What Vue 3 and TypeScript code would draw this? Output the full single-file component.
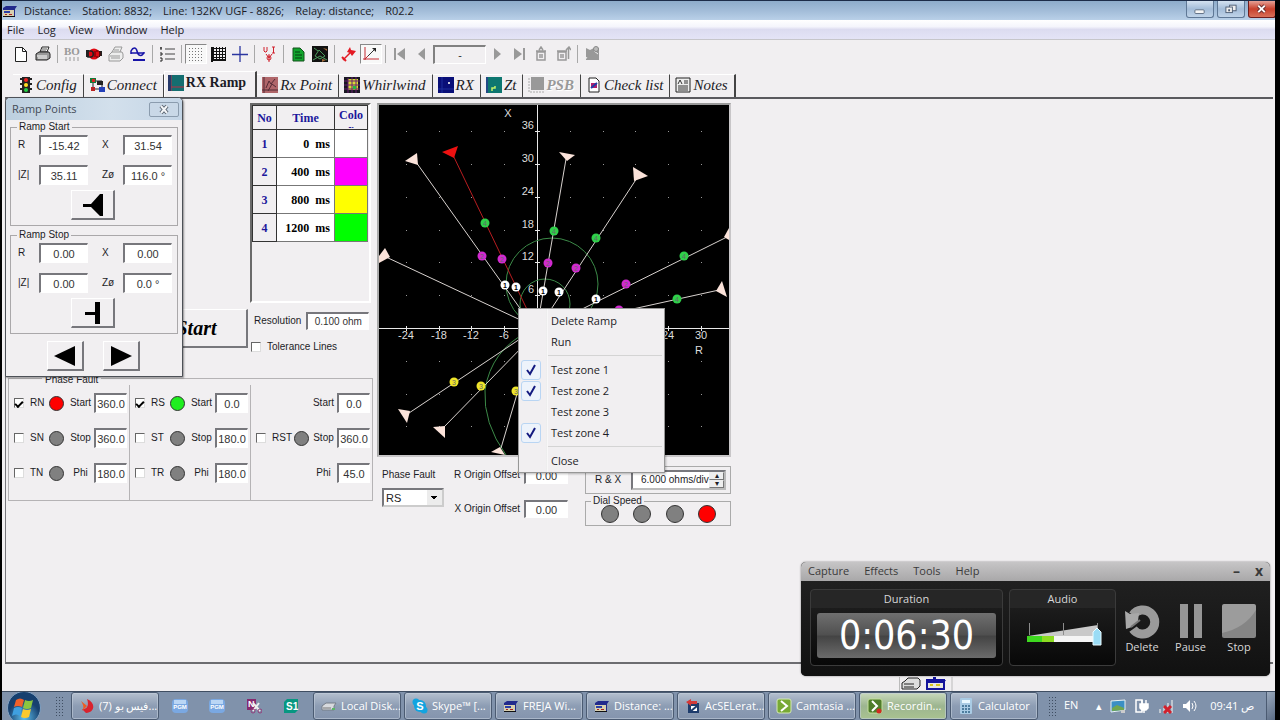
<script setup lang="ts">
type Tool = { icon?: string; label?: string; sep?: boolean; pressed?: boolean; field?: boolean }
type MenuItem = { text?: string; on?: boolean; rule?: boolean }

const art: Record<string, string> = {
  device: '<path d="M1 5l3-2h11l-2 3v8H1z" fill="#222a8c"/><path d="M1 7h11v6H1z" fill="#d8cfae"/><path d="M2 8h6v2H2z" fill="#2b3fa8"/><path d="M3 11h2v1H3zM7 11h3v1H7z" fill="#a22"/><path d="M1 13h12v1H1z" fill="#111"/>',
  page: '<path d="M2.5 1.5h7l4 4v10h-11z" fill="#fff" stroke="#222"/><path d="M9.500 1.500v4h4" fill="none" stroke="#222"/>',
  print: '<path d="M5 6l2-5h7l-2 5z" fill="#fff" stroke="#222"/><path d="M7 3h5M6 5h5" stroke="#555"/><path d="M1 8l3-2h10l1 2v4l-3 2H1z" fill="#999" stroke="#222"/><path d="M2 10h10M3 12h9" stroke="#fff"/>',
  bo: '<text x="0" y="9" font-family="Liberation Serif,serif" font-size="11" font-weight="bold" fill="#999">BO</text><path d="M1 12h14M1 14h14" stroke="#999" stroke-dasharray="2 2"/>',
  stop: '<path d="M0 4h3v7H0zM13 5h3v5h-3z" fill="#222"/><circle cx="8" cy="8" r="5.500" fill="#e00912"/><path d="M2 5h3c3 0 3 6 0 6H2z" fill="none" stroke="#222" stroke-width="1.500"/><path d="M9 5v6M10 5h3l1 1v4l-1 1h-3" fill="none" stroke="#500"/>',
  printOff: '<path d="M4 6l3-5h7l-2 5M1 9l3-3h10l1 2v4l-3 3H1z" fill="#eee" stroke="#999"/><path d="M2 10h10M3 12h9M6 4h5" stroke="#999"/>',
  wave: '<path d="M1 8V5c2-4 5-4 6 0 1 5 4 6 7 2V6M1 7h13" fill="none" stroke="#1714a8" stroke-width="1.500"/><path d="M3 14h12" stroke="#1714a8" stroke-width="2"/>',
  list: '<path d="M6 3h10M6 8h10M6 13h10" stroke="#444"/><path d="M2 1v3M1 2h2M1 7h2v2H1M1 12h2v3H1" fill="none" stroke="#222"/>',
  dots: '<path d="M1 2.500h15M1 5.500h15M1 8.500h15M1 11.500h15M1 14.500h15" stroke="#777" stroke-dasharray="1 2"/>',
  grid: '<path d="M3.500 1v13M6.500 1v13M9.500 1v13M12.500 1v13M15.500 1v13M1 2.500h15M1 5.500h15M1 8.500h15M1 11.500h15M1 14.500h15" stroke="#111"/><path d="M2 1v15M1 14h15" stroke="#111" stroke-width="2"/>',
  cross: '<path d="M8 0v16M0 8.500h16" stroke="#2b35a0" stroke-width="1.300"/>',
  ui: '<path d="M3 1v4l1 1h1l1-1V1M11 1h3M12.500 1v6M11 7h3M5 8l3 4 3-4" fill="none" stroke="#d0202c"/><circle cx="8" cy="12" r="2" fill="none" stroke="#d0202c"/><path d="M8 8v8" stroke="#d0202c"/>',
  report: '<path d="M3 2h7l4 4v9H3z" fill="#11a52d" stroke="#14521c"/><path d="M5 6h5M5 9h7M5 12h7" stroke="#073c10"/>',
  chart: '<path d="M0 0h16v16H0z" fill="#111"/><path d="M3 10L7 4l6 6-5 3zM1 14l7-4 7 4M2 2l4 3" fill="none" stroke="#4a9a5c"/><path d="M11 2l4 1v2zM10 13l4 1-4 2z" fill="#a06838"/>',
  arrow: '<path d="M2 14l8-8" stroke="#e31923" stroke-width="1.500"/><path d="M9 1l1 3 5 1-4 5-2-3-3-1z" fill="#e31923"/><path d="M1 11l4 4" stroke="#e31923" stroke-width="2"/>',
  axes: '<path d="M2 1v13M0 13h16M2 13l4-4" stroke="#c62a32" fill="none"/><path d="M5 10l6-6" stroke="#333"/><path d="M9 2h4v4z" fill="#222"/>',
  first: '<path d="M2 2h2v12H2zM13 2v12L5 8z" fill="#999"/>',
  prev: '<path d="M11 2v12L4 8z" fill="#999"/>',
  next: '<path d="M5 2v12l7-6z" fill="#999"/>',
  last: '<path d="M12 2h2v12h-2zM3 2v12l8-6z" fill="#999"/>',
  trash: '<path d="M4 6h8v8H4zM3 5h10M6 4l2-3 2 3M7 8v4M9 8v4" fill="none" stroke="#999" stroke-width="1.500"/>',
  trashAll: '<path d="M3 6h8v8H3zM2 5h10M6 8v4M8 8v4M13.500 13V2M11 4l3-3 2 3" fill="none" stroke="#999" stroke-width="1.500"/>',
  photo: '<path d="M2 2l4 2 4-2h5v12H2z" fill="#999"/><path d="M10 5l4 3M3 11l-2 3" stroke="#eee"/><circle cx="12" cy="3" r="2.500" fill="#bbb" stroke="#888"/>',
  light: '<path d="M4 0h8v16H4z" fill="#222"/><path d="M2 2h12M2 7h12M2 12h12" stroke="#222" stroke-width="2"/><circle cx="8" cy="3" r="2" fill="#e22"/><circle cx="8" cy="8" r="2" fill="#fd2"/><circle cx="8" cy="13" r="2" fill="#2c4"/>',
  connect: '<path d="M4 4h9v8M4 4v8h6" fill="none" stroke="#222"/><path d="M1 1h6v5H1z" fill="#137a38"/><path d="M3 2h3v3H3z" fill="#d22"/><path d="M8 4h6v4H8z" fill="#222"/><path d="M10 10h6v5h-6z" fill="#2440b8"/><path d="M2 10h4v4H2z" fill="#b22"/>',
  ramp: '<path d="M0 0h16v16H0z" fill="#146e70"/><path d="M3 0v16M0 12h16" stroke="#b82f45"/><path d="M0 0h3v16H0z" fill="#26396a"/>',
  point: '<path d="M0 0h16v16H0z" fill="#b0666a"/><path d="M2 0v16M0 13h16M4 11l3-7 2 3 4-5M6 14l4-7 4 3" fill="none" stroke="#532a35"/>',
  whirl: '<path d="M0 0h16v16H0z" fill="#191722"/><path d="M4 2h10v11H4z" fill="#d8dc34"/><path d="M4 1v15M8 0v16M12 0v16M0 4h16M0 8h16M0 12h16" stroke="#6b2070"/><path d="M9 9h3v3H9z" fill="#24b845"/>',
  rx: '<path d="M0 0h16v16H0z" fill="#090f78"/><path d="M4 0v16M0 12h16" stroke="#1f2f9c"/><path d="M10 5h2v2h-2z" fill="#ccd"/>',
  zt: '<path d="M0 0h16v16H0z" fill="#0e7770"/><path d="M6 14v-3h3V9" fill="none" stroke="#c4f268" stroke-width="1.500"/><path d="M1 0v16" stroke="#234a86" stroke-width="2"/>',
  psb: '<path d="M3 0h13v13H3z" fill="#999"/><path d="M1 1v14h15" fill="none" stroke="#aaa" stroke-dasharray="2 1"/>',
  check: '<path d="M3 1h7l3 3v11H3z" fill="#fff" stroke="#222"/><path d="M5 6h6v5H5z" fill="#b2206b"/><path d="M5 11l6-5" stroke="#203ca8" stroke-width="2"/>',
  notes: '<path d="M1 1h14v14H1z" fill="#eee" stroke="#222"/><path d="M3 7l2-4 2 4M9 4h4M9 6h4M3 9h10M3 11h10M3 13h10" fill="none" stroke="#333"/>',
  opera: '<path d="M8 1c9 4 8 13-1 14l-4-4c6 1 7-5 5-10z" fill="#d9232e"/><path d="M2 3l6 5-5 5c2-3 2-5-1-10z" fill="#ef5a22"/>',
  pgm: '<rect y="1" width="16" height="14" rx="4" fill="#7aa8e2"/><path d="M2 2h12v4H2z" fill="#bad6f5"/><text x="8" y="10.500" text-anchor="middle" font-family="Liberation Sans,sans-serif" font-size="6" font-weight="bold" fill="#fff">PGM</text>',
  snip: '<path d="M1 1h9v11H1z" fill="#862a6f"/><text x="2" y="9" font-family="Liberation Sans,sans-serif" font-size="9" font-weight="bold" fill="#fff">N</text><path d="M7 5l7 8M13 5l-6 8" stroke="#eee" stroke-width="2"/><circle cx="7" cy="13" r="2" fill="none" stroke="#933d7a"/><circle cx="14" cy="13" r="2" fill="none" stroke="#933d7a"/>',
  s1: '<path d="M1 4l3-3h11v11l-3 3H1z" fill="#079781"/><text x="3" y="12" font-family="Liberation Sans,sans-serif" font-size="10" font-weight="bold" fill="#fff">S1</text>',
  disk: '<path d="M1 8l4-3h10l-2 3v4H1z" fill="#d7dade" stroke="#777e88"/><path d="M2 10h8" stroke="#777"/><path d="M11 10h3v2h-3z" fill="#58b865"/>',
  skype: '<circle cx="8" cy="8" r="6" fill="#12a4e0"/><circle cx="4" cy="4" r="3.500" fill="#12a4e0"/><circle cx="12" cy="12" r="3.500" fill="#12a4e0"/><text x="8" y="12" text-anchor="middle" font-family="Liberation Sans,sans-serif" font-size="11" font-weight="bold" fill="#fff">S</text>',
  sel: '<path d="M3 5h11v10H3z" fill="#1e3c6c"/><path d="M6 8h6v5H6z" fill="#fff"/><path d="M6 13l6-5" stroke="#1e3c6c" stroke-width="2"/><path d="M1 4l5-3v2h6v3H6v2z" fill="#d33a38"/>',
  camtasia: '<rect x="1" y="1" width="14" height="14" rx="2" fill="#78a935" stroke="#d5e9b5"/><path d="M5 3l6 5-6 5" fill="none" stroke="#fff" stroke-width="2"/>',
  recorder: '<rect x="1" y="1" width="14" height="14" rx="2" fill="#4f7d2b" stroke="#c5e09c"/><path d="M5 3l5 5-5 5" fill="none" stroke="#fff" stroke-width="2"/><circle cx="12" cy="13" r="2.500" fill="#d32a22"/>',
  calc: '<rect x="2" width="12" height="16" rx="1" fill="#a9cbe4"/><path d="M4 2h8v3H4z" fill="#e8f8ff"/><path d="M4 8h8M4 11h8M4 14h8" stroke="#4e7d9e" stroke-width="2" stroke-dasharray="2 1"/>',
  tray: '<path d="M1 3l14-1v10L1 14z" fill="#3b8fc4" stroke="#e9f1f3"/><path d="M2 10l5-3 7 3v2l-12 1z" fill="#71a650"/><path d="M11 12h4v3h-4z" fill="#ccc"/>',
  power: '<path d="M2 2h6v12H2z" fill="none" stroke="#fff" stroke-width="1.500"/><path d="M6 6h8v4l-2 2H8l-2-2zM8 2v4M12 2v4M10 12v3" fill="#fff" stroke="#fff" stroke-width="1.500"/>',
  network: '<path d="M2 11v4M6 8v7M10 5v10M14 2v13" stroke="#bfc7d0" stroke-width="2"/><path d="M6 8l7 7M13 8l-7 7" stroke="#d1202c" stroke-width="3"/>',
  sound: '<path d="M1 6h3l4-4v12l-4-4H1z" fill="#fff"/><path d="M10 5q2 3 0 6M12 3q4 5 0 10" fill="none" stroke="#fff"/>',
}

const tools: Tool[] = [
  { icon: 'page', label: 'New' }, { icon: 'print', label: 'Print' }, { sep: true },
  { icon: 'bo', label: 'Binary outputs' }, { icon: 'stop', label: 'Binary input' }, { icon: 'printOff', label: 'Print report' }, { icon: 'wave', label: 'Generate' }, { sep: true },
  { icon: 'list', label: 'Sequence list' }, { sep: true },
  { icon: 'dots', label: 'Dotted grid', pressed: true }, { icon: 'grid', label: 'Line grid' }, { icon: 'cross', label: 'Axes' }, { sep: true },
  { icon: 'ui', label: 'Voltage and current' }, { sep: true },
  { icon: 'report', label: 'Report' }, { icon: 'chart', label: 'Chart' }, { sep: true },
  { icon: 'arrow', label: 'Ramp' }, { icon: 'axes', label: 'Ramp points', pressed: true }, { sep: true },
  { icon: 'first', label: 'First' }, { icon: 'prev', label: 'Previous' }, { field: true },
  { icon: 'next', label: 'Next' }, { icon: 'last', label: 'Last' }, { icon: 'trash', label: 'Delete' }, { icon: 'trashAll', label: 'Delete all' }, { sep: true },
  { icon: 'photo', label: 'Overview' },
]

const tabs = [
  { icon: 'light', text: 'Config' }, { icon: 'connect', text: 'Connect' }, { icon: 'ramp', text: 'RX Ramp', active: true },
  { icon: 'point', text: 'Rx Point' }, { icon: 'whirl', text: 'Whirlwind' }, { icon: 'rx', text: 'RX' }, { icon: 'zt', text: 'Zt' },
  { icon: 'psb', text: 'PSB', off: true }, { icon: 'check', text: 'Check list' }, { icon: 'notes', text: 'Notes' },
]

const zones = [
  { time: '0', tone: 'white' }, { time: '400', tone: 'magenta' }, { time: '800', tone: 'yellow' }, { time: '1200', tone: 'lime' },
]

const faults = [
  [{ name: 'RN', on: true, lamp: 'red', word: 'Start', value: '360.0' }, { name: 'SN', lamp: 'grey', word: 'Stop', value: '360.0' }, { name: 'TN', lamp: 'grey', word: 'Phi', value: '180.0' }],
  [{ name: 'RS', on: true, lamp: 'green', word: 'Start', value: '0.0' }, { name: 'ST', lamp: 'grey', word: 'Stop', value: '180.0' }, { name: 'TR', lamp: 'grey', word: 'Phi', value: '180.0' }],
  [{ name: '', lamp: '', word: 'Start', value: '0.0' }, { name: 'RST', lamp: 'grey', word: 'Stop', value: '360.0' }, { name: '', lamp: '', word: 'Phi', value: '45.0' }],
]

const rampGroups = [
  { title: 'Ramp Start', fields: [['R', '-15.42'], ['X', '31.54'], ['|Z|', '35.11'], ['Zø', '116.0 °']], glyph: 'M3 11h8L20 1h3v22h-3L11 14H3z' },
  { title: 'Ramp Stop', fields: [['R', '0.00'], ['X', '0.00'], ['|Z|', '0.00'], ['Zø', '0.0 °']], glyph: 'M5 11h10V1h5v22h-5v-9H5z' },
]

// Diagram geometry: origin of the R/X plane and pixels per 6 ohm
const ox = 158
const oy = 223
const step = 32.8
const at = (n: number) => Math.round(n * step)
const cols = [-4, -3, -2, -1, 1, 2, 3, 4, 5]
const labelled = [-4, -3, -2, -1, 4, 5]
const rows = [6, 5, 4, 3, 2, 1, -1, -2, -3]
const spokes = [
  'M37 57L150 216', 'M187 54L159 217', 'M258 73L165 215', 'M348 132L175 218', 'M340 185L172 222',
  'M7 152L150 219', 'M30 308L150 228', 'M65 322L150 235', 'M122 343L154 235',
]
const heads = [
  '26,56 38,48 39,60', '180,47 196,50 188,56', '254,62 269,71 255,76', '350,123 345,132 350,135',
  '343,176 337,186 348,192', '6,143 0,151 0,158 11,152', '19,304 31,306 28,318', '54,322 66,321 66,333', '112,347 121,342 126,350',
]
const hits = [
  { c: '#2fd04a', n: 4, p: [[106, 118], [175, 126], [217, 133], [305, 151], [298, 194]] },
  { c: '#d22ad0', n: 2, p: [[103, 151], [123, 154], [169, 158], [197, 163], [247, 179], [240, 205]] },
  { c: '#fff', n: 1, p: [[126, 180], [137, 182], [164, 186], [180, 187], [217, 194]] },
  { c: '#efe52a', n: 3, p: [[75, 277], [102, 281], [137, 286]] },
]

const menu: MenuItem[] = [
  { text: 'Delete Ramp' }, { text: 'Run' }, { rule: true },
  { text: 'Test zone 1', on: true }, { text: 'Test zone 2', on: true }, { text: 'Test zone 3' }, { text: 'Test zone 4', on: true },
  { rule: true }, { text: 'Close' },
]

const tasks = [
  { icon: 'disk', text: 'Local Disk...' }, { icon: 'skype', text: 'Skype™ [...' }, { icon: 'device', text: 'FREJA Wi...' },
  { icon: 'device', text: 'Distance: ...' }, { icon: 'sel', text: 'AcSELerat...' }, { icon: 'camtasia', text: 'Camtasia ...' },
  { icon: 'recorder', text: 'Recordin...', active: true }, { icon: 'calc', text: 'Calculator' },
]
</script>

<template>
  <div class="screen">
    <header class="title">
      <svg class="ico" viewBox="0 0 16 16" v-html="art.device" />
      <span>Distance:</span><span>Station: 8832;</span><span>Line: 132KV UGF - 8826;</span><span>Relay: distance;</span><span>R02.2</span>
      <div class="winbtns">
        <button type="button" aria-label="Minimize"><svg viewBox="0 0 28 17"><rect x="8.500" y="9.500" width="10" height="4" rx="1" fill="#f5f5f5" stroke="#5b6b80" /></svg></button>
        <button type="button" aria-label="Restore"><svg viewBox="0 0 28 17"><rect x="12.500" y="4.500" width="7" height="6" fill="#eee" stroke="#4d5d74" /><rect x="8.500" y="6.500" width="7" height="6" fill="#eee" stroke="#4d5d74" /><path d="M11 9h2v2h-2z" fill="#4d5d74" /></svg></button>
        <button type="button" class="kill" aria-label="Close window"><svg viewBox="0 0 28 17"><path d="M10 5l7 7M17 5l-7 7" stroke="#6b3030" stroke-width="4" /><path d="M10 5l7 7M17 5l-7 7" stroke="#fff" stroke-width="2" /></svg></button>
      </div>
    </header>

    <nav class="menubar">
      <button v-for="m in ['File', 'Log', 'View', 'Window', 'Help']" :key="m" type="button">{{ m }}</button>
    </nav>

    <div class="toolbar">
      <template v-for="(t, i) in tools" :key="i">
        <i v-if="t.sep" class="sep" />
        <input v-else-if="t.field" class="recno" value="-" aria-label="Record">
        <button v-else type="button" class="tool" :class="{ pressed: t.pressed }" :aria-label="t.label"><svg class="ico" viewBox="0 0 16 16" v-html="art[t.icon!]" /></button>
      </template>
    </div>

    <nav class="tabs">
      <button v-for="t in tabs" :key="t.text" type="button" class="tab" :class="{ active: t.active, off: t.off }">
        <svg class="ico" viewBox="0 0 16 16" v-html="art[t.icon]" />{{ t.text }}
      </button>
    </nav>

    <main class="work">
      <section class="left">
        <div class="zonebox">
          <table class="zones">
            <thead><tr><th>No</th><th>Time</th><th><div class="clip">Color</div></th></tr></thead>
            <tbody>
              <tr v-for="(z, i) in zones" :key="i"><th>{{ i + 1 }}</th><td class="time">{{ z.time }}&nbsp; ms</td><td :class="z.tone" /></tr>
            </tbody>
          </table>
        </div>
        <div class="run">
          <button type="button" class="start">Start</button>
          <div class="opts">
            <label>Resolution <input class="field" value="0.100 ohm"></label>
            <label class="tol"><input type="checkbox" class="tick"><span>Tolerance Lines</span></label>
          </div>
        </div>
        <fieldset class="faults">
          <legend>Phase Fault</legend>
          <div v-for="(col, c) in faults" :key="c" class="fcol">
            <div v-for="f in col" :key="f.word" class="frow">
              <label v-if="f.name" class="fname"><input type="checkbox" class="tick" :checked="f.on"><span>{{ f.name }}</span></label>
              <i v-if="f.lamp" class="lamp" :class="f.lamp" />
              <label class="fval"><span>{{ f.word }}</span><input class="field" :value="f.value"></label>
            </div>
          </div>
        </fieldset>
      </section>

      <section class="plotcol">
        <div class="plot">
          <svg viewBox="0 0 350 350" class="plane">
            <rect width="350" height="350" fill="#000" />
            <g fill="#999"><template v-for="x in cols" :key="x"><rect v-for="y in rows" :key="y" :x="ox + at(x)" :y="oy - at(y)" width="1" height="1" /></template></g>
            <g stroke="#e8e8e8" fill="none">
              <path d="M158.500 0v350M0 223.500h350" />
              <path v-for="x in cols" :key="x" :d="`M${ox + at(x)}.5 221v5`" />
              <path v-for="y in rows" :key="y" :d="`M156 ${oy - at(y)}.5h5`" />
            </g>
            <g stroke="#3c8a48" fill="none"><circle cx="173" cy="179" r="46" /><circle cx="166" cy="199" r="25" /><path d="M150 226Q112 245 106 285Q104 318 127 350" /></g>
            <g stroke="#d8d2cf" fill="none"><path v-for="s in spokes" :key="s" :d="s" /></g>
            <path d="M73 48L155 219" stroke="#b81d20" />
            <g fill="#fbe3da"><polygon v-for="h in heads" :key="h" :points="h" /></g>
            <polygon points="63,47 79,41 75,53" fill="#ee1111" />
            <g v-for="h in hits" :key="h.c">
              <template v-for="(p, i) in h.p" :key="i">
                <circle :cx="p[0]" :cy="p[1]" r="4.500" :fill="h.c" />
                <text :x="p[0]" :y="p[1] + 3" class="num" :class="{ dark: h.n === 1 }">{{ h.n }}</text>
              </template>
            </g>
            <g class="axis">
              <text v-for="y in [6, 5, 4, 3, 2, 1]" :key="y" x="155" :y="oy - at(y) - 2" text-anchor="end">{{ y * 6 }}</text>
              <text v-for="x in labelled" :key="x" :x="ox + at(x)" :y="oy + 11" text-anchor="middle">{{ x * 6 }}</text>
              <text x="129" y="12" text-anchor="middle">X</text><text x="320" y="249" text-anchor="middle">R</text>
            </g>
          </svg>
          <div class="ctx" role="menu">
            <template v-for="(m, i) in menu" :key="i">
              <hr v-if="m.rule">
              <button v-else type="button" role="menuitem">
                <span class="mark" :class="{ on: m.on }"><svg v-if="m.on" viewBox="0 0 18 18"><path d="M5 9l3 4 5-9" fill="none" stroke="#141a80" stroke-width="2" /></svg></span>{{ m.text }}
              </button>
            </template>
          </div>
        </div>
        <div class="under">
          <label class="pf">Phase Fault<select class="combo"><option>RS</option></select></label>
          <div class="offsets">
            <label>R Origin Offset<input class="field" value="0.00"></label>
            <label>X Origin Offset<input class="field" value="0.00"></label>
          </div>
          <div class="scales">
            <div class="rx"><label for="scale">R &amp; X</label><span class="spin"><input id="scale" value="6.000 ohms/div"><span class="ud"><button type="button" aria-label="Increase">▴</button><button type="button" aria-label="Decrease">▾</button></span></span></div>
            <fieldset class="dial"><legend>Dial Speed</legend><button v-for="n in 4" :key="n" type="button" class="lamp big" :class="n === 4 ? 'red' : 'grey'" :aria-label="`Speed ${n}`" /></fieldset>
          </div>
        </div>
      </section>

      <section class="dialog" role="dialog" aria-label="Ramp Points">
        <div class="dtitle">Ramp Points<button type="button" aria-label="Close dialog"><svg viewBox="0 0 28 13"><path d="M11 3l6 7M17 3l-6 7" stroke="#5c6672" stroke-width="4" /><path d="M11 3l6 7M17 3l-6 7" stroke="#f4f6f8" stroke-width="2" /></svg></button></div>
        <div class="dbody">
          <fieldset v-for="g in rampGroups" :key="g.title">
            <legend>{{ g.title }}</legend>
            <div class="rgrid"><label v-for="f in g.fields" :key="f[0]"><span>{{ f[0] }}</span><input class="field" :value="f[1]"></label></div>
            <button type="button" class="raised" :aria-label="g.title"><svg viewBox="0 0 26 24"><path :d="g.glyph" fill="#000" /></svg></button>
          </fieldset>
          <div class="pair">
            <button type="button" class="raised" aria-label="Previous ramp"><svg viewBox="0 0 26 24"><path d="M23 2v20L2 12z" /></svg></button>
            <button type="button" class="raised" aria-label="Next ramp"><svg viewBox="0 0 26 24"><path d="M3 2v20l21-10z" /></svg></button>
          </div>
        </div>
      </section>
    </main>

    <div class="status">
      <svg viewBox="0 0 50 20"><path d="M2.500 0v20M55 0v20" stroke="#bbb" /><path d="M8 4l3-3h10l2 2v6l-3 3H5V6z" fill="#ddd" stroke="#222" /><path d="M7 7h10M7 10h10" stroke="#222" /><path d="M36 0h3v3h-3z" fill="#119" /><rect x="30" y="3" width="17" height="9" fill="#e8e8e0" stroke="#14149c" stroke-width="2" /><path d="M29 3h20l-2 3H31z" fill="#14149c" /><path d="M33 8h3M39 8h4" stroke="#d8c620" stroke-width="2" /></svg>
    </div>

    <section class="rec" aria-label="Recorder">
      <div class="rmenu"><button v-for="m in ['Capture', 'Effects', 'Tools', 'Help']" :key="m" type="button">{{ m }}</button><button type="button" class="rmin" aria-label="Minimize recorder">–</button><button type="button" class="rclose" aria-label="Close recorder">x</button></div>
      <div class="rbody">
        <div class="card dur"><h2>Duration</h2><output>0:06:30</output></div>
        <div class="card aud"><h2>Audio</h2>
          <svg viewBox="0 0 78 24"><path d="M2 14L72 3v11z" fill="#c9c9c9" /><path d="M3.500 1v12M37.500 1v12M71.500 1v6" stroke="#8c8c8c" /><rect x="1" y="14" width="72" height="6" fill="#f5f5f5" /><rect x="1" y="14" width="27" height="6" fill="#8ddc22" /><rect x="1" y="14" width="15" height="6" fill="#3ed81f" /><path d="M67 10l4-4 4 4v13h-8z" fill="#9adcf5" stroke="#e9fbff" /></svg>
        </div>
        <div class="acts">
          <button type="button"><svg viewBox="0 0 36 36"><path d="M9 12A12 12 0 1 1 9 26" fill="none" stroke="#9b9b9b" stroke-width="9" /><path d="M1 8l5 3 9-1-1 8-6 6-6 2z" fill="#a8a8a8" /><path d="M7 24l9-7" stroke="#777" stroke-width="2" /></svg>Delete</button>
          <button type="button"><svg viewBox="0 0 36 36"><path d="M7 1h8v34H7zM21 1h8v34h-8z" fill="#969696" /></svg>Pause</button>
          <button type="button"><svg viewBox="0 0 36 36"><rect x="1" y="1" width="34" height="34" rx="2" fill="#858585" /><path d="M1 30Q24 25 35 7V3l-2-2H3L1 3z" fill="#9c9c9c" /></svg>Stop</button>
        </div>
      </div>
    </section>

    <footer class="taskbar">
      <button type="button" class="orb" aria-label="Start menu"><svg viewBox="0 0 34 34"><defs><radialGradient id="orb" cy=".8"><stop offset="0" stop-color="#5fc0ee" /><stop offset="1" stop-color="#17406f" /></radialGradient></defs><circle cx="17" cy="17" r="16.500" fill="url(#orb)" stroke="#7e9fc0" /><path d="M9 9q4-3 8 0l-2 7q-4-2-8 0z" fill="#f0602a" /><path d="M18 9q4 2 8 0l-2 8q-4 2-8 0z" fill="#8cc63f" /><path d="M7 17q4-2 8 0l-2 8q-4-3-8 0z" fill="#3fa0e0" /><path d="M16 18q4 2 8 0l-2 8q-4 2-8 0z" fill="#fbc92d" /></svg></button>
      <i class="grip" />
      <button type="button" class="task"><svg class="ico" viewBox="0 0 16 16" v-html="art.opera" /><span>(7) فيس بو...</span></button>
      <div class="quick"><button v-for="(q, i) in ['pgm', 'pgm', 'snip', 's1']" :key="i" type="button" :aria-label="`Pinned ${i + 1}`"><svg class="ico" viewBox="0 0 16 16" v-html="art[q]" /></button></div>
      <button v-for="t in tasks" :key="t.text" type="button" class="task" :class="{ active: t.active }"><svg class="ico" viewBox="0 0 16 16" v-html="art[t.icon]" /><span>{{ t.text }}</span></button>
      <i class="grip far" />
      <span class="lang">EN</span>
      <div class="tray"><button type="button" aria-label="Hidden icons">▴</button><svg v-for="t in ['tray', 'power', 'network', 'sound']" :key="t" class="ico" viewBox="0 0 16 16" v-html="art[t]" /></div>
      <span class="clock">09:41 ص</span>
      <button type="button" class="peek" aria-label="Show desktop" />
    </footer>
  </div>
</template>

<style>
body { background: #000; }
</style>

<style scoped>
* { box-sizing: border-box; }
button, input, select { font: inherit; color: inherit; padding: 0; margin: 0; border-radius: 0; }
button { border: 0; background: none; }
fieldset { margin: 0; padding: 0; min-width: 0; }
svg { display: block; }
.ico { width: 16px; height: 16px; flex: none; }
.screen { position: relative; min-height: 100vh; display: flex; flex-direction: column; background: #f1eff1; border-left: 2px solid #000; border-right: 5px solid #000; font: 11px/14px "Open Sans", "Noto Sans", sans-serif; color: #1c1c26; overflow: hidden; }

.title { display: flex; align-items: center; height: 20px; gap: 11px; border-top: 1px solid #1d2c48; background: linear-gradient(#8eacca, #a2bcd8 50%, #b9d0e8); }
.title .ico { margin-right: -5px; }
.winbtns { margin-left: auto; display: flex; gap: 3px; align-self: flex-start; }
.winbtns button { width: 28px; height: 17px; border: 1px solid #5f7896; border-top: 0; border-radius: 0 0 3px 3px; background: linear-gradient(#d3e1f0, #a3bcd8 50%, #bfd3e8); overflow: hidden; }
.winbtns .kill { border-color: #6e1c1c; background: linear-gradient(#e6a196, #c9402c 50%, #d8705a); margin-right: -1px; }
.menubar { display: flex; gap: 13px; height: 20px; align-items: center; padding-left: 5px; background: linear-gradient(#fff, #f4f5fc 35%, #dcdcf0 50%, #e4e4f6); border-bottom: 1px solid #c6c6ca; }
.toolbar { display: flex; align-items: center; height: 30px; padding: 0 0 2px 8px; }
.tool { width: 22px; height: 20px; display: grid; place-items: center; }
.pressed { border: 1px solid; border-color: #888 #fff #fff #888; background: #f8f8f8; }
.sep { width: 1px; height: 18px; margin: 0 3px; background: #a8a8a8; }
.recno { width: 53px; height: 19px; text-align: center; border: 1px solid; border-width: 2px 1px 1px 2px; border-color: #808080 #fff #fff #808080; background: #f1eff1; }
.tabs { display: flex; align-items: flex-end; height: 27px; padding-left: 11px; }
.tab { display: flex; align-items: center; gap: 2px; height: 23px; padding: 0 6px 2px 5px; border-right: 1px solid #444; border-top: 1px solid #fff; font: italic 15px/18px "Liberation Serif", serif; white-space: nowrap; }
.tab.active { font-size: 14px; font-weight: bold; font-style: normal; height: 26px; padding: 0 9px 4px 3px; border-right-width: 2px; border-left: 1px solid #fff; }
.tab.off { color: #999; font-weight: bold; text-shadow: 1px 1px #fff; }
.tab:last-child { border-right-width: 2px; }

.work { position: relative; flex: 1; display: flex; align-items: flex-start; gap: 4px; margin: 0 2px 0 3px; padding: 4px 0 0 2px; border-top: 2px solid #5a5a5e; border-left: 1px solid #77777c; border-bottom: 2px solid #6c6c70; }
.left, .plotcol, .dialog { font: 10px/14px "Liberation Sans", sans-serif; }
.left { width: 365px; flex: none; }
.zonebox { width: 121px; min-height: 200px; margin: 0 2px 0 auto; border: 2px solid; border-color: #6a6a6a #fff #fff #6a6a6a; }
.zones { border-collapse: collapse; table-layout: fixed; width: 116px; font: bold 12px/14px "Liberation Serif", serif; text-align: center; }
.zones th, .zones td { padding: 0; height: 28px; border: 1px solid #777; }
.zones th { border-color: #333; color: #1c189c; background: #f1eff1; }
.zones thead th { height: 24px; }
.zones th:nth-child(1) { width: 24px; }
.zones th:nth-child(3) { width: 33px; }
.zones .time { background: #fff; color: #000; text-align: right; padding-right: 4px; white-space: nowrap; }
.clip { height: 20px; width: 26px; margin: 0 auto; overflow: hidden; overflow-wrap: anywhere; }
.white { background: #fff; }
.magenta { background: #f0f; }
.yellow { background: #ff0; }
.lime { background: #0f0; }
.run { display: flex; justify-content: flex-end; gap: 6px; margin-top: 6px; }
.start { width: 102px; height: 39px; border: 1px solid; border-width: 1px 2px 2px 1px; border-color: #fff #77777c #77777c #fff; font: italic bold 20px/24px "Liberation Serif", serif; color: #000; }
.opts { width: 120px; display: flex; flex-direction: column; gap: 10px; padding-top: 3px; margin-right: -1px; }
.opts label { display: flex; align-items: center; gap: 5px; white-space: nowrap; }
.opts .tol { gap: 6px; margin-left: -3px; }
.opts .field { width: 63px; height: 18px; font-size: 10px; }
.field { min-width: 0; border: 1px solid; border-width: 2px 1px 1px 2px; border-color: #77777c #fff #fff #77777c; background: #fff; text-align: center; color: #333; font-size: 11px; outline: 0; }
.tick { appearance: none; width: 10px; height: 10px; flex: none; background: #fff; border: 1px solid; border-color: #666 #ddd #ddd #666; }
.tick:checked { display: grid; place-items: center; }
.tick:checked::after { content: ""; width: 6px; height: 3px; border: solid #000; border-width: 0 0 2px 2px; transform: rotate(-45deg); }
.faults { display: grid; grid-template-columns: repeat(3, minmax(0, 1fr)); margin-top: 15px; border: 1px solid #b5b3b5; }
.faults legend { margin-left: 33px; margin-bottom: -2px; padding: 4px 3px 0; }
.fcol { display: grid; gap: 15px; padding: 8px 2px 17px 5px; border-right: 1px solid #b5b3b5; }
.fcol:last-child { border-right: 0; }
.frow { display: flex; align-items: center; gap: 2px; height: 20px; }
.fname { display: flex; align-items: center; gap: 6px; }
.fname span { min-width: 17px; }
.lamp { width: 15px; height: 15px; flex: none; border: 1px solid #333; border-radius: 50%; }
.lamp.grey { background: #808080; }
.lamp.red { background: #f00; }
.lamp.green { background: #1fee1f; }
.fval { margin-left: auto; display: flex; align-items: center; gap: 2px; }
.fval span { width: 23px; text-align: center; }
.fval .field { width: 33px; height: 20px; }

.plotcol { width: 354px; flex: none; }
.plot { position: relative; border: 2px solid #c8c6c8; border-top-color: #999; border-left-color: #aaa; }
.plane { width: 100%; }
.axis text { font: 11px "Liberation Sans", sans-serif; fill: #ddd; }
.num { font: 7px "Liberation Sans", sans-serif; text-anchor: middle; fill: #666; }
.num.dark { fill: #000; font-weight: bold; }
.ctx { position: absolute; left: 139px; top: 203px; width: 147px; padding: 1px 0; background: linear-gradient(90deg, #f1eff1 27px, #dcdcdc 27px, #fff 28px, #f1eff1 29px); border: 1px solid #979797; box-shadow: 1px 1px 2px #0004; font: 11px/21px "Open Sans", "Noto Sans", sans-serif; }
.ctx button { display: flex; align-items: center; width: 100%; height: 21px; padding-left: 2px; gap: 10px; text-align: left; }
.ctx hr { height: 1px; margin: 3px 2px 3px 29px; border: 0; background: #d4d4d4; }
.mark { width: 20px; height: 20px; border: 1px solid transparent; border-radius: 3px; }
.mark.on { border-color: #b9d5f3; background: #edf3fb; }
.under { display: flex; align-items: flex-start; padding: 9px 0 0 5px; }
.pf { display: flex; flex-direction: column; gap: 6px; width: 70px; padding-top: 2px; }
.combo { appearance: none; width: 62px; height: 19px; padding-left: 2px; border: 2px solid; border-color: #77777c #ccc #ccc #77777c; color: #222; font-size: 11px; background: linear-gradient(45deg, transparent 50%, #000 50%) 46px 6px / 4px 4px no-repeat, linear-gradient(135deg, #000 50%, transparent 50%) 50px 6px / 4px 4px no-repeat, linear-gradient(#ececec, #ececec) right / 15px 100% no-repeat, #fff; }
.offsets { display: grid; gap: 16px; width: 116px; }
.offsets label { display: flex; align-items: center; justify-content: flex-end; gap: 4px; white-space: nowrap; }
.offsets .field { width: 44px; height: 18px; flex: none; }
.scales { margin-left: auto; width: 146px; }
.rx { display: flex; align-items: center; justify-content: space-between; height: 28px; padding: 0 4px 0 9px; border: 1px solid #aaa; white-space: nowrap; }
.spin { display: flex; width: 95px; height: 20px; border: 2px solid; border-color: #77777c #bbb #bbb #77777c; background: #fff; }
.spin input { flex: 1; min-width: 0; border: 0; padding-left: 8px; background: transparent; font-size: 10px; outline: 0; }
.ud { width: 15px; display: grid; }
.ud button { border: 1px solid; border-color: #eee #777 #777 #eee; background: #eee; line-height: 6px; font-size: 8px; overflow: hidden; }
.dial { display: flex; justify-content: space-between; margin-top: 1px; padding: 0 14px 2px 15px; border: 1px solid #aaa; }
.dial legend { margin: 0 0 -2px -10px; padding: 0 2px; line-height: 12px; }
.lamp.big { width: 18px; height: 18px; }

.dialog { position: absolute; left: -1px; top: -2px; width: 178px; background: #f1eff1; border: 1px solid #4d5157; border-radius: 5px 5px 0 0; box-shadow: 1px 1px 2px #0006; }
.dtitle { display: flex; justify-content: space-between; align-items: center; height: 22px; padding: 0 3px 0 6px; border-radius: 4px 4px 0 0; background: linear-gradient(90deg, #bccfdf, #d3e0ec 60%, #c4d5e6); font: 11px/14px "Open Sans", sans-serif; color: #444b55; }
.dtitle button { width: 30px; height: 15px; border: 1px solid #8b9cae; border-radius: 2px; background: #c9d8e7; }
.dbody { padding: 0 4px 5px; }
.dbody fieldset { border: 1px solid #aaa8aa; padding: 0 5px 5px 7px; margin-bottom: 2px; }
.dbody legend { padding: 0 2px; margin-left: -1px; line-height: 14px; }
.rgrid { display: grid; grid-template-columns: 70px 1fr; gap: 10px 14px; padding-top: 1px; }
.rgrid label { display: flex; align-items: center; justify-content: space-between; }
.rgrid .field { width: 49px; height: 20px; }
.raised { display: grid; place-items: center; width: 44px; height: 30px; border: 1px solid; border-width: 1px 2px 2px 1px; border-color: #fff #77777c #77777c #fff; }
.raised svg { width: 26px; height: 24px; }
fieldset > .raised { margin: 5px auto 0 53px; }
.pair { display: flex; gap: 19px; padding: 5px 0 0 37px; }
.pair .raised { width: 37px; }

.status { height: 27px; padding: 13px 0 0 895px; overflow: hidden; }
.status svg { width: 50px; height: 20px; overflow: visible; }

.rec { position: absolute; right: 5px; bottom: 44px; width: 469px; background: #161616; border-radius: 5px; color: #d8d8d8; box-shadow: 0 0 2px #0008; }
.rmenu { display: flex; align-items: center; gap: 15px; height: 19px; padding: 0 7px 1px; color: #3a3a3a; background: linear-gradient(#c6c5c6, #a9a8a9); border-radius: 5px 5px 0 0; }
.rmin, .rclose { font-weight: bold; font-size: 14px; }
.rmin { margin-left: auto; }
.rbody { display: flex; align-items: stretch; padding: 8px 8px 10px 9px; background: linear-gradient(#202020, #111); border-radius: 0 0 5px 5px; }
.card { border: 1px solid #3b3b3b; border-radius: 4px; background: linear-gradient(#262626 18px, #1c1c1c 18px, #080808); padding: 0 6px 7px; margin-right: 6px; }
.card h2 { margin: 0; font: inherit; line-height: 18px; text-align: center; }
.dur { width: 193px; }
.dur output { display: block; margin-top: 5px; height: 45px; border-radius: 3px; text-align: center; font: 39px/46px "DejaVu Sans Condensed", "Open Sans", sans-serif; color: #fff; background: linear-gradient(#707070, #505050 48%, #444 52%, #6b6b6b); }
.aud { width: 107px; }
.aud svg { width: 78px; height: 24px; margin: 14px 0 0 10px; }
.acts { flex: 1; display: flex; justify-content: space-between; padding: 14px 5px 0 2px; }
.acts button { display: flex; flex-direction: column; align-items: center; gap: 1px; width: 36px; }
.acts svg { width: 36px; height: 36px; }

.taskbar { position: relative; display: flex; align-items: center; height: 29px; gap: 3px; padding-left: 5px; background: #8092ab; border-top: 1px solid #3f4e62; color: #fff; overflow: hidden; white-space: nowrap; }
.orb { width: 34px; height: 34px; margin: 4px 11px 0 0; flex: none; }
.orb svg { width: 34px; height: 34px; }
.grip { width: 9px; height: 20px; margin-right: 4px; flex: none; background: radial-gradient(#3f4e62 1px, transparent 1px) 0 0 / 3px 3px; }
.grip.far { margin-left: 7px; }
.task { flex: 0 1 88px; min-width: 0; height: 28px; display: flex; align-items: center; gap: 4px; padding-left: 7px; border: 1px solid #4b5b72; border-radius: 3px; background: linear-gradient(#b4bfce, #8d9db4 50%, #8494ad); box-shadow: inset 0 0 0 1px #c2cddb99; overflow: hidden; }
.task.active { background: linear-gradient(#c9d9bb, #9cb590 50%, #a9c290); }
.quick { display: flex; gap: 21px; padding: 0 11px 0 10px; }
.lang { margin: 0 15px 3px 0; }
.tray { display: flex; align-items: center; gap: 8px; }
.clock { margin: 0 auto; }
.peek { width: 9px; height: 28px; border-left: 1px solid #4b5b72; background: linear-gradient(135deg, #9aa9bd, #5a6b84); }
</style>
